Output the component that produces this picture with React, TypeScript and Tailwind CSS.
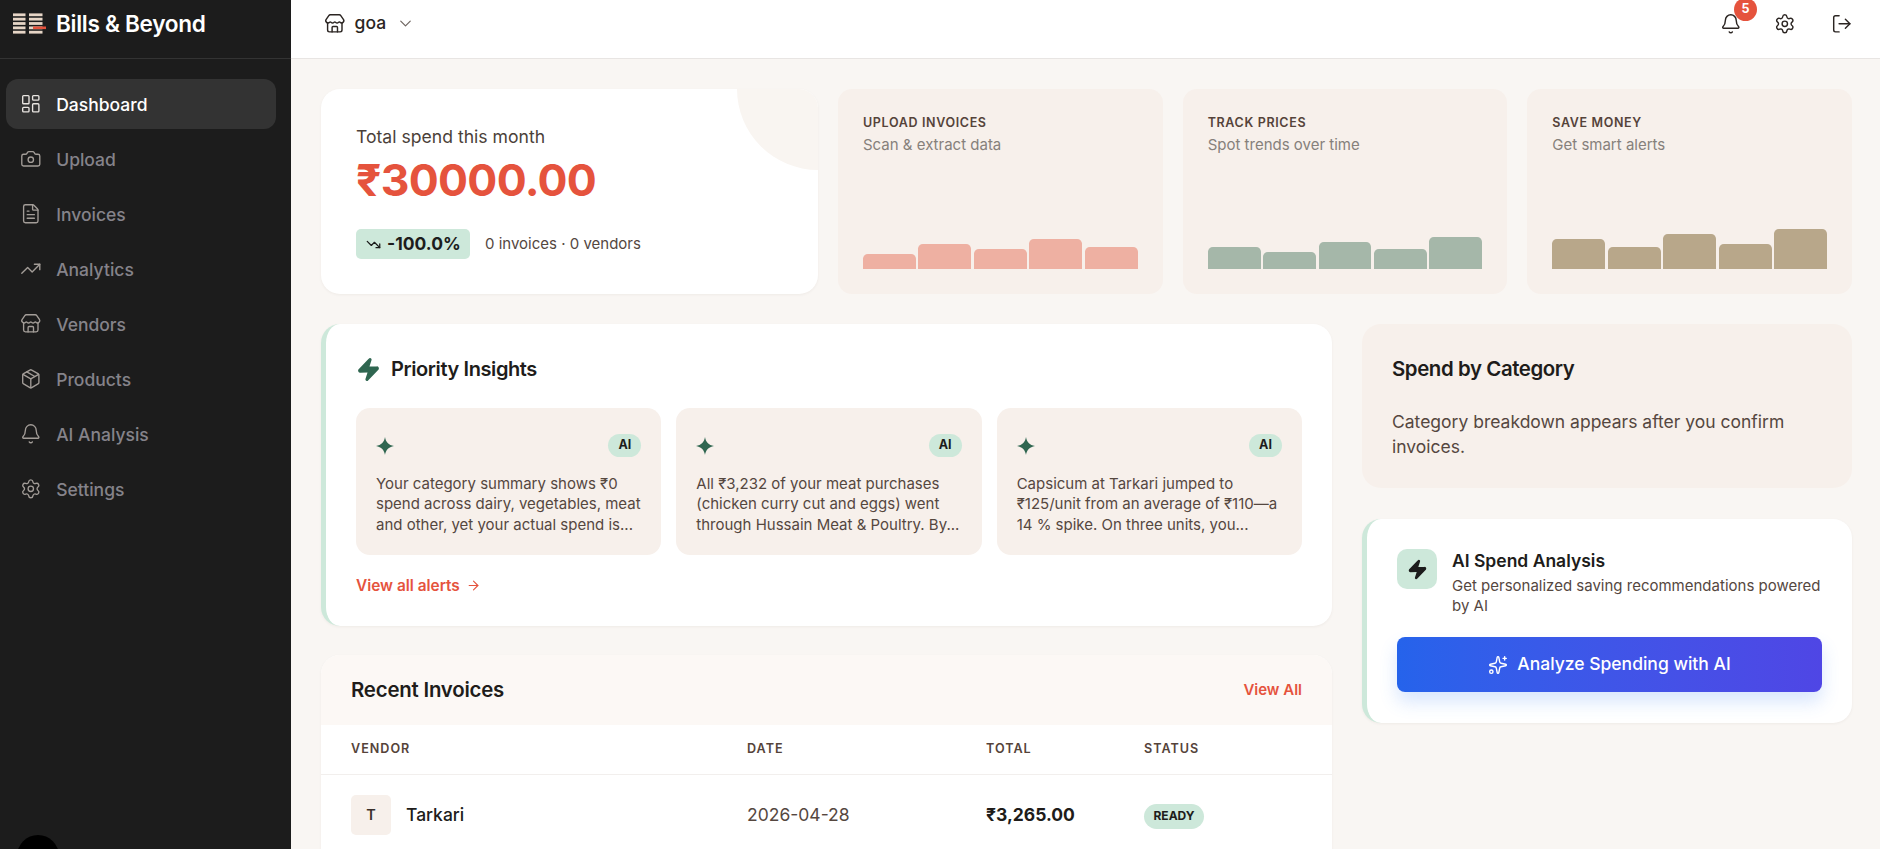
import React from "react";
import { LayoutDashboard, Camera, FileText, TrendingUp, TrendingDown, Store, Package, Bell, Settings, ChevronDown, LogOut, ArrowRight, Zap, Sparkles } from "lucide-react";

const nav = [
  { label: "Dashboard", icon: LayoutDashboard, active: true },
  { label: "Upload", icon: Camera },
  { label: "Invoices", icon: FileText },
  { label: "Analytics", icon: TrendingUp },
  { label: "Vendors", icon: Store },
  { label: "Products", icon: Package },
  { label: "AI Analysis", icon: Bell },
  { label: "Settings", icon: Settings },
];

const features = [
  { title: "UPLOAD INVOICES", sub: "Scan & extract data", color: "bg-[#eeb0a2]", bars: [15, 25, 20, 30, 22] },
  { title: "TRACK PRICES", sub: "Spot trends over time", color: "bg-[#a5b7a9]", bars: [22, 17, 27, 20, 32] },
  { title: "SAVE MONEY", sub: "Get smart alerts", color: "bg-[#b8a78a]", bars: [30, 22, 35, 25, 40] },
];

const insights = [
  ["Your category summary shows ₹0", "spend across dairy, vegetables, meat", "and other, yet your actual spend is..."],
  ["All ₹3,232 of your meat purchases", "(chicken curry cut and eggs) went", "through Hussain Meat & Poultry. By..."],
  ["Capsicum at Tarkari jumped to", "₹125/unit from an average of ₹110—a", "14 % spike. On three units, you..."],
];

function Logo() {
  const rows = [0, 1, 2, 3, 4];
  return (
    <svg width="33" height="22" viewBox="0 0 33 22" className="shrink-0">
      {rows.map((r) => (
        <g key={r}>
          <rect x="0" y={r * 4.35 + 0.4} width="12.5" height="2.8" fill="#e6d5c6" />
          <rect x="16" y={r * 4.35 + 0.4} width="13.5" height="2.8" fill="#e6d5c6" />
        </g>
      ))}
      <rect x="20" y="13.5" width="13" height="2.6" fill="#e5533d" />
    </svg>
  );
}

function Star() {
  return (
    <svg width="18" height="18" viewBox="0 0 18 18" className="shrink-0">
      <path d="M9 0 C9.8 5 12.5 8 18 9 C12.5 10 9.8 13 9 18 C8.2 13 5.5 10 0 9 C5.5 8 8.2 5 9 0Z" fill="#2f6650" />
    </svg>
  );
}

export default function App() {
  return (
    <div className="flex h-[849px] w-[1880px] overflow-hidden bg-[#f9f6f3] font-['Inter',sans-serif] text-[#1c1c1c]">
      <aside className="relative flex w-[291px] shrink-0 flex-col bg-[#1c1c1c]">
        <div className="flex h-[59px] items-center gap-[10px] border-b border-[#333333] pb-[11px] pl-[13px]">
          <Logo />
          <span className="text-[22.6px] font-semibold tracking-[-0.3px] text-white">Bills &amp; Beyond</span>
        </div>
        <nav className="flex w-[276px] flex-col gap-[5px] pl-[6px] pt-[20px]">
          {nav.map(({ label, icon: Icon, active }) => (
            <div
              key={label}
              className={`flex h-[50px] items-center gap-[14.6px] rounded-[12px] pl-[14px] text-[17.5px] font-medium ${active ? "bg-[#333333] text-white" : "text-[#85838a]"}`}
            >
              <Icon size={21.6} strokeWidth={1.5} className={active ? "text-[#e9e5e1]" : "text-[#a39d98]"} />
              <span className="translate-y-[1px]">{label}</span>
            </div>
          ))}
        </nav>
        <div className="absolute left-[17px] top-[835px] h-[42px] w-[42px] rounded-full bg-black" />
      </aside>

      <div className="flex min-w-0 flex-1 flex-col">
        <header className="flex h-[59px] shrink-0 items-center justify-between border-b border-[#e8e5e3] bg-white pb-[11px] pl-[33px] pr-[27.6px]">
          <div className="flex items-center">
            <Store size={21.6} strokeWidth={1.6} className="text-[#2b2522]" />
            <span className="ml-[9px] text-[17.5px] font-medium text-[#2b2522]">goa</span>
            <ChevronDown size={19} strokeWidth={1.5} className="ml-[10px] text-[#6e6560]" />
          </div>
          <div className="flex items-center">
            <div className="relative">
              <Bell size={21.6} strokeWidth={1.6} className="text-[#2b2522]" />
              <span className="absolute left-[13.5px] top-[-15px] flex h-[23px] w-[23px] items-center justify-center rounded-full bg-[#e5533d] text-[12.5px] font-bold text-white">5</span>
            </div>
            <Settings size={21.6} strokeWidth={1.6} className="ml-[31.8px] text-[#2b2522]" />
            <LogOut size={21.6} strokeWidth={1.6} className="ml-[35.4px] text-[#2b2522]" />
          </div>
        </header>

        <main className="flex min-h-0 flex-1 flex-col gap-[30px] overflow-hidden pl-[30px] pr-[28px] pt-[30px]">
          <section className="grid shrink-0 grid-cols-[497px_1fr_1fr_1fr] gap-[20px]">
            <div className="relative h-[205px] overflow-hidden rounded-[19px] bg-white pl-[35px] pt-[36px] shadow-[0_1px_3px_rgba(60,40,20,0.05)]">
              <div className="absolute right-[-81px] top-[-81px] h-[162px] w-[162px] rounded-full bg-[#f9f5f1]" />
              <p className="text-[17.6px] leading-[24px] text-[#4b3f39]">Total spend this month</p>
              <p className="mt-[3px] text-[44.5px] font-bold leading-[56px] tracking-[-0.7px] text-[#e5533d]">₹30000.00</p>
              <div className="mt-[21px] flex items-center gap-[15px]">
                <div className="flex h-[30px] w-[114px] items-center gap-[6px] rounded-[5px] bg-[#cde8da] pl-[10px] text-[17.5px] font-bold text-[#1c1c1c]">
                  <TrendingDown size={15} strokeWidth={2} />
                  <span>-100.0%</span>
                </div>
                <span className="text-[15px] text-[#55473f]">0 invoices · 0 vendors</span>
              </div>
            </div>
            {features.map((f) => (
              <div key={f.title} className="flex h-[205px] flex-col rounded-[14px] bg-[#f7f0eb] px-[25px] pb-[25px] pt-[25px]">
                <p className="text-[12.5px] font-semibold leading-[17px] tracking-[0.65px] text-[#55433a]">{f.title}</p>
                <p className="mt-[3px] text-[15px] leading-[21px] text-[#86807b]">{f.sub}</p>
                <div className="mt-auto flex items-end gap-[2.6px]">
                  {f.bars.map((h, i) => (
                    <div key={i} className={`flex-1 rounded-t-[4.8px] ${f.color}`} style={{ height: h }} />
                  ))}
                </div>
              </div>
            ))}
          </section>

          <section className="grid grid-cols-[1011px_490px] gap-[30px]">
            <div className="flex flex-col gap-[29px]">
              <div className="h-[302px] shrink-0 rounded-[19px] border-l-[5px] border-[#cde8da] bg-white pl-[30px] pr-[30px] pt-[30px] shadow-[0_1px_3px_rgba(60,40,20,0.05)]">
                <div className="flex items-center gap-[10px]">
                  <Zap size={25} fill="#2f6650" strokeWidth={2} className="text-[#2f6650]" />
                  <h2 className="text-[20px] font-semibold leading-[30px] tracking-[-0.4px] text-[#201c1a]">Priority Insights</h2>
                </div>
                <div className="mt-[24px] grid grid-cols-3 gap-[15px]">
                  {insights.map((lines, i) => (
                    <div key={i} className="h-[147px] rounded-[14px] bg-[#f7f0eb] px-[20px] pt-[26px]">
                      <div className="flex h-[23px] items-center justify-between">
                        <Star />
                        <span className="flex h-[23px] w-[33px] items-center justify-center rounded-full bg-[#cde8da] text-[12.5px] font-bold text-[#1c1c1c]">AI</span>
                      </div>
                      <p className="mt-[16.5px] text-[15px] leading-[20.5px] text-[#55473f]">
                        {lines.map((l) => (
                          <span key={l} className="block whitespace-nowrap">{l}</span>
                        ))}
                      </p>
                    </div>
                  ))}
                </div>
                <div className="mt-[19px] flex items-center gap-[6px] text-[15.4px] font-semibold text-[#e5533d]">
                  <span>View all alerts</span>
                  <ArrowRight size={15} strokeWidth={1.7} />
                </div>
              </div>

              <div className="overflow-hidden rounded-t-[19px] bg-white shadow-[0_1px_3px_rgba(60,40,20,0.05)]">
                <div className="flex h-[70px] items-center justify-between bg-[#fcf8f5] pl-[30px] pr-[30px]">
                  <h2 className="text-[20.4px] font-semibold tracking-[-0.2px] text-[#201c1a]">Recent Invoices</h2>
                  <span className="text-[15px] font-semibold text-[#e5533d]">View All</span>
                </div>
                <div className="grid h-[50px] grid-cols-[396px_239px_158px_1fr] items-center border-b border-[#f2efed] pl-[30px] text-[12.6px] font-semibold tracking-[1px] text-[#55433a]">
                  <span>VENDOR</span>
                  <span>DATE</span>
                  <span>TOTAL</span>
                  <span>STATUS</span>
                </div>
                <div className="grid h-[80px] grid-cols-[396px_239px_158px_1fr] items-center pl-[30px]">
                  <div className="flex items-center gap-[15px]">
                    <span className="flex h-[40px] w-[40px] items-center justify-center rounded-[5px] bg-[#f7f0eb] text-[14.4px] font-semibold text-[#3a302b]">T</span>
                    <span className="text-[17.5px] font-medium text-[#201c1a]">Tarkari</span>
                  </div>
                  <span className="text-[17.5px] text-[#55473f]">2026-04-28</span>
                  <span className="text-[17.5px] font-bold text-[#201c1a]">₹3,265.00</span>
                  <span className="mt-[2px] flex h-[25px] w-[60px] items-center justify-center rounded-full bg-[#cde8da] text-[12px] font-bold text-[#201c1a]">READY</span>
                </div>
              </div>
            </div>

            <div className="flex flex-col gap-[31px]">
              <div className="h-[164px] rounded-[19px] bg-[#f7f0eb] pl-[30px] pr-[30px] pt-[30px]">
                <h2 className="text-[20.4px] font-semibold leading-[30px] tracking-[-0.4px] text-[#201c1a]">Spend by Category</h2>
                <p className="mt-[25px] text-[17.5px] leading-[25px] text-[#55473f]">Category breakdown appears after you confirm invoices.</p>
              </div>
              <div className="h-[204px] rounded-[19px] border-l-[5px] border-[#cde8da] bg-white pl-[30px] pr-[30px] pt-[30px] shadow-[0_1px_3px_rgba(60,40,20,0.05)]">
                <div className="flex gap-[15px]">
                  <span className="flex h-[40px] w-[40px] shrink-0 items-center justify-center rounded-[10px] bg-[#cde8da]">
                    <Zap size={21} fill="#1c1c1c" strokeWidth={2} className="text-[#1c1c1c]" />
                  </span>
                  <div>
                    <p className="text-[17.5px] font-semibold leading-[24px] text-[#201c1a]">AI Spend Analysis</p>
                    <p className="mt-[2.5px] text-[15px] leading-[20px] text-[#55473f]">Get personalized saving recommendations powered by AI</p>
                  </div>
                </div>
                <button className="mt-[21.5px] flex h-[55px] w-full items-center justify-center gap-[9px] rounded-[8px] bg-gradient-to-r from-[#2563eb] to-[#4f46e5] text-[17.5px] font-medium text-white shadow-[0_10px_18px_rgba(59,130,246,0.2)]">
                  <Sparkles size={20} strokeWidth={1.7} />
                  <span>Analyze Spending with AI</span>
                </button>
              </div>
            </div>
          </section>
        </main>
      </div>
    </div>
  );
}
